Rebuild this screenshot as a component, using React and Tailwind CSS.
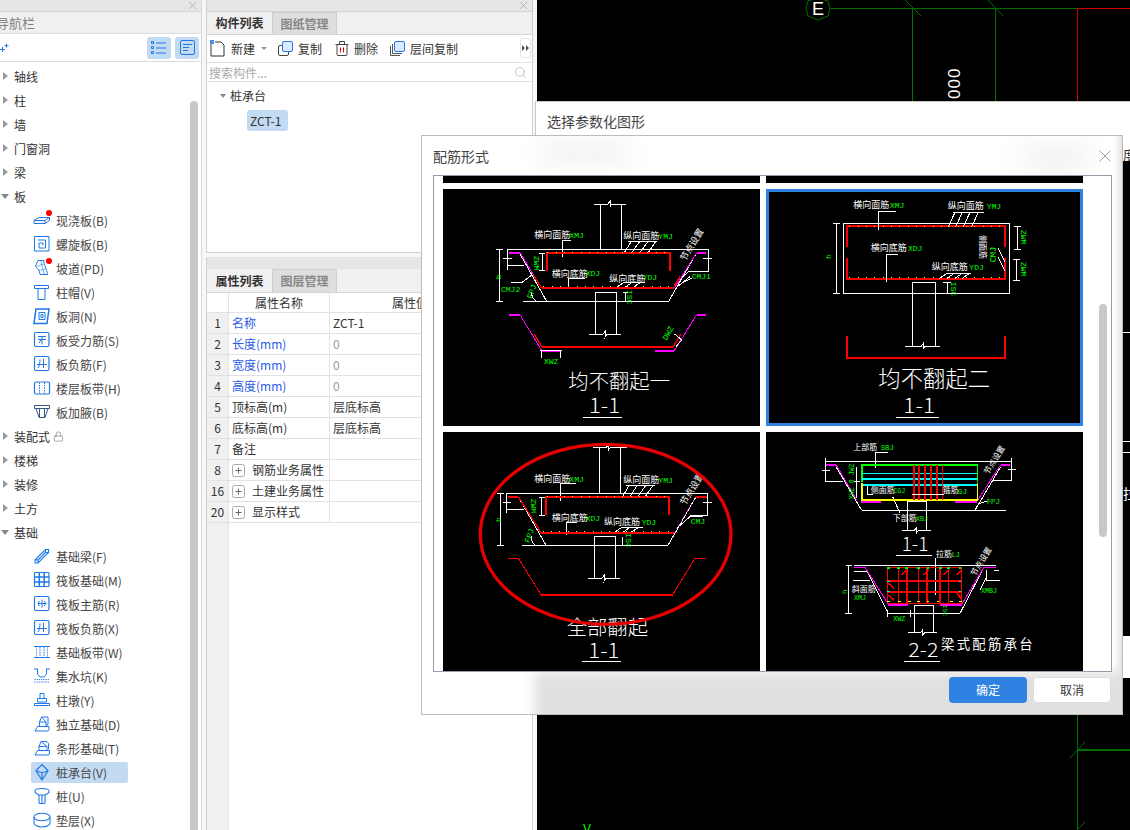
import React from "react";
import { X, Search, Lock } from "lucide-react";

const B = "#1f78e6";
const RED = "#ff0000", MAG = "#ff00ff", GRN = "#00ff00", YEL = "#ffff00", CYA = "#00ffff", W = "#ffffff";

const I = ({ children, dot, c = B }) => (
  <svg width="18" height="18" viewBox="0 0 18 18" fill="none" stroke={c} strokeWidth="1" className="shrink-0 overflow-visible">
    {children}
    {dot && <circle cx="16" cy="2" r="3" fill="#ff0000" stroke="none" />}
  </svg>
);

const icons = {
  slab: <path d="M1 9.5h11l4.5-3H6l-5 3v3h11l4.5-3v-3M12 9.5v3" />,
  spiral: <path d="M1.5 1.5h14.500v14.500H1.5zM5 5h7.500v8H6V8h4v2.500" />,
  ramp: <><path d="M5 1.500h6c-1 4 3 8 3.500 14H7c0-4-3-6-4.500-8.500z" /><path d="M8 2c0 4 2.500 8 3 13M10.500 5l-7 2.500M12.500 10l-7 1.500" strokeWidth=".6" /></>,
  cap: <path d="M1.5 2.500h14v3h-14zM3.500 5.500h10M5 5.500v11h7v-11" />,
  hole: <><path d="M3 2h13l-2 14.500H1z" strokeWidth="1.500" /><path d="M6 5.500h6v7H6z" /><path d="M8 7.500h2v3H8z" /></>,
  rebarA: <><rect x="1.500" y="1.500" width="14.500" height="14" rx="1.500" strokeWidth="1.200" /><path d="M5 8.500h8M5 5.500h8M9 5v8.500M6 12l2-3" /></>,
  rebarB: <><rect x="1.500" y="1.500" width="14.500" height="14" rx="1.500" strokeWidth="1.200" /><path d="M4 9.500h10M7 4.500c0 2-.5 7-2 8.500M10.500 4v9" /></>,
  strip: <><rect x="1.500" y="3" width="15" height="12" rx="1.500" strokeWidth="1.200" /><path d="M6.500 3.500v11M11.500 3.500v11" strokeDasharray="1.500 1" /></>,
  haunch: <path d="M1.500 2.500h15v3h-15zM3 5.500l3 9h6l3-9M6.500 5.500v9M11.500 5.500v9" stroke="#36577f" />,
  beam: <path d="M2 13L12.500 2.500h3v3L5 16H2zM2 13h3v3M12.500 2.500v3h3M5 13L12.500 5.500" strokeWidth="1.100" />,
  raft: <><rect x="1.500" y="1.500" width="14.500" height="14" rx="1" strokeWidth="1.200" /><path d="M1.500 6h14.500M1.500 11h14.500M6.300 1.500v14M11.200 1.500v14" strokeWidth="1.500" /></>,
  main: <><rect x="1.500" y="1.500" width="14.500" height="14" rx="1.500" strokeWidth="1.200" /><path d="M5 8.500h8M9 4.500v8M6.500 6l-1.500 2.500 1.500 2.500M11 6l2 2.500-2 2.500" /></>,
  band: <><path d="M1 3.500h16M1 14.500h16" strokeWidth="1.100" /><path d="M7 4v10M11 4v10" strokeDasharray="1.500 1" /><path d="M3.500 4v10M14.500 4v10" strokeWidth=".5" /></>,
  pit: <><path d="M1 2h4M13 2h4M4.500 2v5l2.500 3h4l2.500-3V2" /><path d="M1.500 12.500h15M1.500 15h15" strokeDasharray="1.200 1" /></>,
  pier: <path d="M7 2.500h4v5H7zM4.500 7.500h9v3.500h-9zM1.500 14.500h15M1.500 14.500v-2h15v2" />,
  pad: <path d="M6.500 7l2-5h6.500v7l-2 3M6.500 7h6.500v5M8.500 2l4.500 5M2 16l2.500-4.500h11.500v3L15 16zM6.500 7v4.500" />,
  stripF: <path d="M6 7.500l2-5h6l1.500 2v6M6 7.500h8v4M6 7.500v4M2 16l2.500-4.500h12V14l-1 2zM8 2.500l6 5" />,
  cap2: <path d="M9 1.500l6 6-2 3.500-4 6-4-6-2-3.500zM3 7.500c2 1.500 4 2 6 2s4-.5 6-2M9 9.500v7.500" strokeWidth="1.200" />,
  pile: <path d="M2 4c0-1.500 3-2.500 7-2.500S16 2.500 16 4v1.500L12 8v7.500a1 1 0 01-1 1H7a1 1 0 01-1-1V8L2 5.500zM6 8h6M9 8v8" strokeWidth="1.100" />,
  pad2: <><ellipse cx="9" cy="6" rx="8" ry="3.800" strokeWidth="1.100" /><path d="M1 6v6c0 2.200 3.600 4 8 4s8-1.800 8-4V6" strokeWidth="1.100" /></>,
};

const tree = [
  ["p", "轴线"], ["p", "柱"], ["p", "墙"], ["p", "门窗洞"], ["p", "梁"], ["o", "板"],
  ["c", "现浇板(B)", "slab", 1], ["c", "螺旋板(B)", "spiral"], ["c", "坡道(PD)", "ramp", 1], ["c", "柱帽(V)", "cap"],
  ["c", "板洞(N)", "hole"], ["c", "板受力筋(S)", "rebarA"], ["c", "板负筋(F)", "rebarB"], ["c", "楼层板带(H)", "strip"], ["c", "板加腋(B)", "haunch"],
  ["p", "装配式", null, 0, 1], ["p", "楼梯"], ["p", "装修"], ["p", "土方"], ["o", "基础"],
  ["c", "基础梁(F)", "beam"], ["c", "筏板基础(M)", "raft"], ["c", "筏板主筋(R)", "main"], ["c", "筏板负筋(X)", "rebarB"],
  ["c", "基础板带(W)", "band"], ["c", "集水坑(K)", "pit"], ["c", "柱墩(Y)", "pier"], ["c", "独立基础(D)", "pad"], ["c", "条形基础(T)", "stripF"],
  ["s", "桩承台(V)", "cap2"], ["c", "桩(U)", "pile"], ["c", "垫层(X)", "pad2"],
];

const Strip = () => (
  <div className="h-[12px] shrink-0 bg-[#e6e6e6] border-b border-[#d4d4d4] flex items-center justify-end pr-[2px]">
    <X size={13} strokeWidth={1.1} className="text-[#999999]" />
  </div>
);

function Nav() {
  return (
    <div className="relative w-[202px] h-full shrink-0 bg-white border-r border-[#d8d8d8] overflow-hidden">
      <Strip />
      <div className="h-[22px] bg-[#f0f0f0] border-b border-[#dcdcdc] flex items-center -ml-[4px] text-[13px] text-[#808080]">导航栏</div>
      <div className="h-[28px] border-b border-[#dcdcdc] flex items-center justify-between pr-[2px]">
        <svg width="9" height="10" viewBox="0 0 9 10" fill="none" stroke={B} strokeWidth="1"><path d="M2.500 4v5M0 6.500h5M6.500 1v3.500M4.500 2.700h4" /></svg>
        <div className="flex gap-[4px]">
          <div className="w-[24px] h-[22px] rounded-[3px] bg-[#c3daf3] flex items-center justify-center">
            <svg width="16" height="14" viewBox="0 0 16 14" fill="none" stroke={B}><path d="M5 2h10M5 7h10M5 12h10" /><path d="M0.500 .500h2v2h-2zM.500 5.500h2v2h-2zM.500 10.500h2v2h-2z" /></svg>
          </div>
          <div className="w-[24px] h-[22px] rounded-[3px] bg-[#c3daf3] flex items-center justify-center">
            <svg width="15" height="15" viewBox="0 0 15 15" fill="none" stroke={B}><rect x=".5" y=".5" width="14" height="14" rx="1.500" /><path d="M3 4.500h9M3 7.500h6M3 10.500h5" /></svg>
          </div>
        </div>
      </div>
      <div className="pt-[2px]">
        {tree.map(([k, t, ic, dot, lock]) =>
          k === "p" || k === "o" ? (
            <div key={t} className="h-[24px] flex items-center pl-[3px] text-[#333333]">
              <div className="w-[5px] mr-[6px] flex items-center">
                {k === "p" ? (
                  <div className="border-y-[4px] border-y-transparent border-l-[5px] border-l-[#999999]" />
                ) : (
                  <div className="-ml-[2px] border-x-[4px] border-x-transparent border-t-[5px] border-t-[#888888]" />
                )}
              </div>
              <span className="pt-[2px]">{t}</span>
              {lock && <Lock size={11} strokeWidth={1.2} className="ml-[3px] text-[#666666]" />}
            </div>
          ) : (
            <div key={t} className="h-[24px] flex items-center text-[#444444]">
              <div className={`ml-[31px] w-[97px] h-[21px] pl-[2px] flex items-center gap-[5px] whitespace-nowrap rounded-[2px] ${k === "s" ? "bg-[#c3daf3]" : ""}`}>
                <I dot={dot}>{icons[ic]}</I>
                <span className="pt-[2px]">{t}</span>
              </div>
            </div>
          )
        )}
      </div>
      <div className="absolute left-[190px] top-[101px] w-[8px] h-[729px] rounded-t-[4px] bg-[#c8c8c8]" />
    </div>
  );
}

const Tabs = ({ a, b, h = "h-[23px]" }) => (
  <div className={`${h} shrink-0 flex bg-[#f0f0f0] border-b border-[#d4d4d4]`}>
    <div className="w-[65px] flex items-center justify-center font-bold text-[#333333]">{a}</div>
    <div className="w-[65px] flex items-center justify-center font-bold text-[#888888] bg-[#dedede] border-x border-t border-[#cfcfcf]">{b}</div>
  </div>
);

const Tool = ({ icon, label, w }) => (
  <div className={`flex items-center gap-[5px] ${w}`}>
    {icon}
    <span className="whitespace-nowrap">{label}</span>
  </div>
);

const props = [
  ["1", "名称", "ZCT-1", 1], ["2", "长度(mm)", "0", 1, 1], ["3", "宽度(mm)", "0", 1, 1], ["4", "高度(mm)", "0", 1, 1],
  ["5", "顶标高(m)", "层底标高"], ["6", "底标高(m)", "层底标高"], ["7", "备注", ""],
  ["8", "钢筋业务属性", "", 0, 0, 1], ["16", "土建业务属性", "", 0, 0, 1], ["20", "显示样式", "", 0, 0, 1],
];

function Middle() {
  return (
    <div className="w-[327px] h-full shrink-0 ml-[4px] flex flex-col gap-[4px] text-[#333333]">
      <div className="h-[253px] shrink-0 flex flex-col bg-white border-x border-b border-[#d0d0d0]">
        <Strip />
        <Tabs a="构件列表" b="图纸管理" />
        <div className="h-[28px] shrink-0 border-b border-[#e2e2e2] flex items-center pl-[3px] relative">
          <Tool w="w-[52px]" label="新建" icon={
            <svg width="16" height="17" viewBox="0 0 16 17" fill="none" stroke="#333333"><path d="M1 3v13h13V5l-3-3H5" /><path d="M0 0h4v4H0z" fill="#4a90e2" stroke="none" /></svg>
          } />
          <div className="ml-[-1px] mr-[11px] border-x-[3px] border-x-transparent border-t-[3px] border-t-[#999999]" />
          <Tool w="w-[57px]" label="复制" icon={
            <svg width="15" height="15" viewBox="0 0 15 15" fill="none"><rect x=".5" y="4.500" width="10" height="10" rx="1.500" stroke="#444444" /><rect x="4.500" y=".5" width="10" height="10" rx="1.500" fill="#dbeafe" stroke={B} /></svg>
          } />
          <Tool w="w-[55px]" label="删除" icon={
            <svg width="14" height="15" viewBox="0 0 14 15" fill="none" stroke="#444444"><path d="M.5 3.500h13M4.500 3.500V.5h5v3M2 3.500v10a1 1 0 001 1h8a1 1 0 001-1v-10" /><path d="M5.500 6.500v5M8.500 6.500v5" stroke="#e00000" /></svg>
          } />
          <Tool label="层间复制" icon={
            <svg width="15" height="15" viewBox="0 0 15 15" fill="none"><path d="M.5 5v9.500H10M2.500 3v9.500H12" stroke="#555555" /><rect x="4.500" y=".5" width="10" height="10" rx="1.500" fill="#dbeafe" stroke={B} /></svg>
          } />
          <div className="absolute left-[313px] top-[3px] w-[11px] h-[20px] border border-[#e4e4e4] rounded-[3px] flex items-center justify-center">
            <svg width="7" height="6" viewBox="0 0 7 6" fill="#555555"><path d="M0 0l3 3-3 3zM4 0l3 3-3 3z" /></svg>
          </div>
        </div>
        <div className="h-[19px] shrink-0 border-b border-[#e2e2e2] flex items-center justify-between pl-[2px] pr-[5px] text-[#aaaaaa]">
          <span className="pt-[1px]">搜索构件...</span>
          <Search size={13} strokeWidth={1.3} className="text-[#aaaaaa]" />
        </div>
        <div className="pt-[4px]">
          <div className="h-[20px] flex items-center pl-[13px]">
            <div className="mr-[4px] border-x-[3px] border-x-transparent border-t-[4px] border-t-[#888888]" />
            桩承台
          </div>
          <div className="mt-[4px] ml-[40px] w-[41px] h-[21px] rounded-[3px] bg-[#c3daf3] flex items-center pl-[3px]">ZCT-1</div>
        </div>
      </div>
      <div className="flex-1 flex flex-col bg-white border-x border-[#d0d0d0] min-h-0">
        <div className="h-[12px] shrink-0 bg-[#e6e6e6]" />
        <Tabs a="属性列表" b="图层管理" h="h-[24px]" />
        <div className="h-[20px] shrink-0 flex border-b border-[#e2e2e2]">
          <div className="w-[22px] border-r border-[#e2e2e2]" />
          <div className="w-[101px] border-r border-[#e2e2e2] flex items-center justify-center">属性名称</div>
          <div className="pl-[62px] flex items-center whitespace-nowrap">属性值</div>
        </div>
        {props.map(([n, name, val, blue, gray, plus]) => (
          <div key={n} className="h-[21px] shrink-0 flex border-b border-[#e2e2e2]">
            <div className="w-[22px] bg-[#f0f0f0] border-r border-[#e2e2e2] flex items-center justify-center">{n}</div>
            <div className={`w-[101px] pl-[3px] border-r border-[#e2e2e2] flex items-center gap-[7px] ${blue ? "text-[#2b5ce6]" : ""}`}>
              {plus && (
                <svg width="13" height="13" viewBox="0 0 13 13" fill="none" stroke="#666666"><rect x=".5" y=".5" width="12" height="12" rx="2" stroke="#aaaaaa" /><path d="M3.500 6.500h6M6.500 3.500v6" /></svg>
              )}
              {name}
            </div>
            <div className={`pl-[3px] flex items-center ${gray ? "text-[#999999]" : ""}`}>{val}</div>
          </div>
        ))}
        <div className="flex-1 w-[22px] bg-[#f0f0f0] border-r border-[#e2e2e2]" />
      </div>
    </div>
  );
}

const P = ({ d, c = W, w = 3, dash }) => <path d={d} fill="none" stroke={c} strokeWidth={w} strokeDasharray={dash} shapeRendering="crispEdges" />;
const T = ({ x, y, s = 27, c = W, r, children }) => (
  <text x={x} y={y} fontSize={s} fill={c} transform={r ? `rotate(${r} ${x} ${y})` : undefined}>{children}</text>
);
const G = ({ x, y, s = 24, r, children }) => (
  <text x={x} y={y} fontSize={s} fill={GRN} transform={r ? `rotate(${r} ${x} ${y})` : undefined} className="[font-family:'Liberation_Mono',monospace]">{children}</text>
);
const Big = ({ x, y, s = 60, len, children }) => (
  <text x={x} y={y} fontSize={s} fill={W} textLength={len} lengthAdjust="spacingAndGlyphs" className="font-light">{children}</text>
);
const Brk = ({ x, y, l, r }) => <P d={`M${l} ${y}H${x - 6}l6 -8v16l6 -8H${r}`} />;

const Cad = ({ box, children }) => (
  <svg viewBox={box} className="block w-full h-full bg-black">{children}</svg>
);

const Cell1 = () => (
  <Cad box="9 27 951 711">
    <Brk x={510} y={72} l={463} r={557} />
    <P d="M481 72V208M544 72V208M203 208H805M250 364H686M238 218L320 364M686 364L770 218" />
    <P d="M178 209V365M168 209H190M168 365H190M203 208V270M203 257H252M190 235H215M805 208V275M755 275H805M790 235H815" />
    <P d="M367 232V182H392M565 183H650M575 183L550 222M600 183L572 222M625 183L597 222M648 183L622 222" />
    <P d="M385 328V295H435M530 322L550 308H615M555 322L575 308M580 322L600 308M212 308H245L275 285" />
    <P d="M306 219V272M298 219H315M298 272H315M555 338V365M548 338H565" />
    <P d="M290 364A30 30 0 0 1 275 335M720 300L745 275H800M715 318L750 290M725 310L755 295" />
    <P d="M466 338V463M530 338V463M466 338H530" />
    <Brk x={495} y={463} l={447} r={543} />
    <P c={MAG} w={5} d="M207 218H240M305 325H362M798 218H770M703 325H645" />
    <P c={MAG} d="M240 218L305 325M770 218L703 325" />
    <P c={RED} w={6} d="M322 272V218H690V272M305 324H703" />
    <P c={RED} w={4} d="M280 285L305 325M703 318L720 290" />
    <P c={YEL} w={3} dash="3 22" d="M322 216H690M310 320H703" />
    <P c={MAG} w={5} d="M207 404H240M305 512H362M798 404H770M703 512H645" />
    <P c={MAG} d="M240 404L305 512M770 404L703 512" />
    <P c={RED} w={6} d="M305 500H700" />
    <P c={RED} w={4} d="M283 463L305 500M700 500L722 463" />
    <P d="M305 512V535M362 512V535M300 512H365M704 462L725 480L708 500" />
    <T x={283} y={175}>横向面筋</T><G x={388} y={175}>XMJ</G>
    <T x={550} y={177}>纵向面筋</T><G x={655} y={177}>YMJ</G>
    <T x={335} y={291}>横向底筋</T><G x={437} y={288}>XDJ</G>
    <T x={508} y={305}>纵向底筋</T><G x={608} y={299}>YDJ</G>
    <G x={183} y={335}>CMJ2</G><G x={755} y={298}>CMJ1</G>
    <G x={183} y={298} r={-90}>b</G><G x={283} y={228} r={90}>ZWM</G>
    <G x={275} y={358} r={-70}>FPJ</G><G x={560} y={330} r={90}>ISC</G>
    <G x={312} y={552}>XWZ</G><G x={680} y={482} r={-60}>DWZ</G>
    <T x={735} y={245} r={-58}>节点设置</T>
    <Big x={385} y={628} s={61}>均不翻起一</Big>
    <Big x={447} y={699} s={64} len={93}>1-1</Big>
    <P d="M430 712H546" />
  </Cad>
);

const Cell2 = () => (
  <Cad box="27 36 933 693">
    <P d="M250 130H748V340H250ZM229 130V340M218 130H240M218 340H240M762 140H782M772 140V207M762 207H782M758 237H780M768 237V302M758 302H780" />
    <P c={RED} w={6} d="M260 200V138H735V200M260 235V298H735V235M260 468V533H735V468" />
    <P c={YEL} w={3} dash="3 22" d="M268 140H730M268 292H730" />
    <P d="M355 150V95H408M580 97H672M585 97L565 140M607 97L587 140M630 97L610 140M655 97L635 140" />
    <P d="M378 305V224H415M560 280H632M538 296L560 280M560 296L582 280M584 296L606 280M606 296L628 280" />
    <P d="M715 205L735 245M715 232L735 272M457 308V498M527 308V498M457 308H527M550 308H572M563 308V340" />
    <Brk x={490} y={498} l={436} r={540} />
    <T x={280} y={84}>横向面筋</T><G x={390} y={84}>XMJ</G>
    <T x={563} y={86}>纵向面筋</T><G x={680} y={86}>YMJ</G>
    <T x={332} y={213}>横向底筋</T><G x={444} y={212}>XDJ</G>
    <T x={515} y={270}>纵向底筋</T><G x={628} y={269}>YDJ</G>
    <T x={660} y={165} s={24} r={90}>侧面筋</T>
    <G x={707} y={247} s={26} r={-90}>CMJ</G>
    <G x={212} y={237} r={-90}>h</G>
    <G x={782} y={150} r={90}>ZWM</G><G x={782} y={246} r={90}>ZWM</G>
    <G x={574} y={305} r={90}>ISC</G>
    <Big x={355} y={620} s={67}>均不翻起二</Big>
    <Big x={430} y={699} s={64} len={95}>1-1</Big>
    <P d="M408 712H537" />
  </Cad>
);

const Cell3 = () => (
  <Cad box="9 6 951 717">
    <Brk x={505} y={52} l={460} r={560} />
    <P d="M479 52V190M541 52V190M200 190H803M245 346H684M235 200L318 346M684 346L768 200" />
    <P d="M180 190V347M170 190H192M170 347H192M200 190V250M200 238H252M190 217H212M803 190V255M750 255H803M790 217H815" />
    <P d="M304 203V255M296 203H315M296 255H315M361 212V160H408M558 165H645M568 165L545 205M592 165L567 205M618 165L590 205M640 165L612 205" />
    <P d="M379 315V278H412M525 306L545 292H610M550 306L570 292M575 306L595 292M285 346A30 30 0 0 1 275 318M710 295L752 258H790" />
    <P d="M463 320V445M527 320V445M463 320H527M548 320V346" />
    <Brk x={492} y={445} l={445} r={540} />
    <P c={RED} w={6} d="M318 254V200H688V254M302 308H703" />
    <P c={RED} w={5} d="M205 200H235M768 200H800" />
    <P c={RED} w={4} d="M235 200L303 308" />
    <P c={MAG} d="M703 308L768 200" w={2} dash="6 6" />
    <P c={YEL} w={3} dash="3 22" d="M322 198H685M308 303H700" />
    <P c={RED} w={5} d="M203 385H235M303 494H698M765 385H797" />
    <P c={RED} d="M235 385L303 494M698 494L765 385" />
    <T x={283} y={157}>横向面筋</T><G x={388} y={157}>XMJ</G>
    <T x={550} y={160}>纵向面筋</T><G x={655} y={158}>YMJ</G>
    <T x={335} y={273}>横向底筋</T><G x={437} y={272}>XDJ</G>
    <T x={492} y={285}>纵向底筋</T><G x={605} y={285}>YDJ</G>
    <G x={752} y={282}>CMJ</G><G x={184} y={276} r={-90}>h</G>
    <G x={272} y={206} r={90}>ZWM</G><G x={268} y={340} r={-70}>FPJ</G><G x={558} y={310} r={90}>ISC</G>
    <T x={735} y={228} r={-58}>节点设置</T>
    <Big x={380} y={616} s={61}>全部翻起</Big>
    <Big x={445} y={684} s={64} len={93}>1-1</Big>
    <P d="M427 693H543" />
    <ellipse cx="497" cy="313" rx="376" ry="270" fill="none" stroke="#e60000" strokeWidth="10" />
  </Cad>
);

const Cell4 = () => (
  <Cad box="18 6 951 717">
    <P d="M197 95H755M197 85V155M197 155H250M755 85V150M700 150H755M187 120H210M745 117H768M228 110L305 241M645 241L722 110M305 241H738M290 110V205M283 155H300" />
    <P d="M347 115V68H385M322 168V192H340M398 200L420 250M645 241A35 35 0 0 1 680 215" />
    <P c={MAG} w={5} d="M197 104H228M303 215H362M750 104H722M650 215H585" />
    <P c={MAG} d="M228 104L290 210M722 104L650 215" />
    <P c={GRN} w={5} d="M305 155V104H652V155" />
    <P c={CYA} w={5} d="M305 130H652M305 147H652M305 165H652" />
    <P c={YEL} w={5} d="M305 160V210H652V160" />
    <P c={RED} w={5} d="M462 105V210M477 105V210M495 105V210M512 105V210M530 105V210M547 105V210" />
    <P d="M455 192H552M442 213V300M500 213V300M442 213H500" />
    <Brk x={470} y={300} l={425} r={512} />
    <T x={280} y={60} s={24}>上部筋</T><G x={362} y={60} s={22}>SBJ</G>
    <T x={332} y={188} s={24}>侧面筋</T><G x={400} y={188} s={20}>CGJ</G>
    <T x={548} y={190} s={24}>箍筋</T><G x={594} y={192} s={22}>GJ</G>
    <T x={398} y={272} s={24}>下部筋</T><G x={468} y={272} s={20}>XBJ</G>
    <G x={680} y={222} s={22}>FPJ</G><G x={283} y={208} s={20} r={-90}>XWZ 8 JWZ</G>
    <T x={685} y={135} s={24} r={-58}>节点设置</T>
    <Big x={425} y={362} s={58} len={80}>1-1</Big>
    <P d="M408 376H515" />
    <P d="M282 407H707M258 407H275M265 407V550M255 550H275M282 425H325M702 421H718M280 450H330M680 420V450H720M525 385V495M315 412L385 550M385 550H600L672 412M382 540V560M450 540V560M382 550H450M660 480L680 440" />
    <P c={RED} w={5} d="M382 412H604V520H382ZM382 452H604M382 485H604M415 412V520M440 412V520M475 412V520M500 412V520M540 412V520M565 412V520" />
    <P c={RED} w={5} d="M425 435L440 420M490 435L505 420M550 435L565 420M590 435L604 420M385 460L402 475M385 495L402 510M590 490L604 505" />
    <P c={MAG} w={5} d="M282 412H315M385 524H445M707 412H672M605 524H540" />
    <P c={MAG} d="M315 412L385 523M672 412L605 523" />
    <P c={YEL} w={4} d="M382 515H390M415 515H423M445 515H453M472 515H480M500 515H508M530 515H538M570 515H578M597 515H605" />
    <P c={GRN} w={4} d="M382 414H390M412 414H420M436 414H444M472 414H480M500 414H508M538 414H546M562 414H570M596 414H604" />
    <P c={CYA} w={4} d="M382 454H390M382 485H390M596 454H604M596 485H604" />
    <P d="M462 525V608M520 525V608M462 525H520" />
    <Brk x={488} y={608} l={445} r={530} />
    <T x={528} y={380} s={24}>拉筋</T><G x={575} y={380} s={20}>LJ</G>
    <T x={275} y={487} s={24}>斜面筋</T><G x={282} y={510} s={20}>XMJ</G>
    <G x={663} y={490} s={20}>XMBJ</G><G x={400} y={572} s={20}>XWZ</G>
    <G x={262} y={492} s={22} r={-90}>h</G><G x={548} y={525} s={18} r={90}>ISC</G>
    <T x={645} y={440} s={24} r={-58}>节点设置</T>
    <Big x={445} y={681} s={58} len={90}>2-2</Big>
    <P d="M432 694H540" />
    <text x={543} y={656} fontSize={40} fill={W} letterSpacing={7}>梁式配筋承台</text>
  </Cad>
);

function Dialog() {
  return (
    <div className="absolute left-[421px] top-[135px] w-[702px] h-[580px] bg-white border border-[#bcbcbc] flex flex-col overflow-hidden">
      <div className="absolute left-[120px] top-[6px] w-[85px] h-[22px] bg-[#f0f0f0] blur-md" />
      <div className="absolute left-[600px] top-[10px] w-[65px] h-[24px] bg-[#f0f0f0] blur-md" />
      <div className="absolute right-0 top-0 w-[8px] h-full bg-linear-to-r from-white to-[#e4e4e4]" />
      <div className="absolute left-[113px] right-0 top-[536px] bottom-0 bg-[#e0e0e0] blur-[6px] -mr-[10px] -mb-[10px]" />
      <div className="relative h-[39px] shrink-0 flex items-center justify-between pl-[11px] pr-[7px]">
        <span className="text-[14px] text-[#444444]">配筋形式</span>
        <X size={20} strokeWidth={0.9} className="text-[#777777]" />
      </div>
      <div className="relative ml-[11px] w-[679px] h-[497px] shrink-0 bg-white border border-[#9a9aaa] overflow-hidden">
        <div className="grid grid-cols-[317px_317px] grid-rows-[7px_237px_239px] gap-[6px] pl-[9px]">
          <div className="bg-black" />
          <div className="bg-black" />
          <Cell1 />
          <div className="border-[3px] border-[#2f82e0] bg-black"><Cell2 /></div>
          <Cell3 />
          <Cell4 />
        </div>
        <div className="absolute left-[665px] top-[128px] w-[8px] h-[233px] rounded-[4px] bg-[#c8c8c8]" />
      </div>
      <div className="relative flex justify-end gap-[6px] pt-[5px] pr-[11px]">
        <div className="w-[78px] h-[26px] rounded-[4px] bg-[#2f82e2] text-white flex items-center justify-center">确定</div>
        <div className="w-[78px] h-[26px] rounded-[4px] bg-white border border-[#dddddd] text-[#333333] flex items-center justify-center">取消</div>
      </div>
    </div>
  );
}

function BackDialog() {
  return (
    <div className="absolute left-[535px] top-[101px] w-[595px] h-[577px] bg-white border-l border-t border-[#c8c8c8]">
      <div className="pl-[11px] pt-[12px] text-[14px] text-[#444444]">选择参数化图形</div>
      <div className="absolute left-[587px] top-[46px] w-[8px] text-[13px] text-[#333333] overflow-hidden whitespace-nowrap">度</div>
      <div className="absolute left-[587px] top-[59px] w-[8px] h-[475px] bg-black overflow-hidden">
        <div className="absolute left-0 right-0 top-[171px] h-px bg-white" />
        <div className="absolute left-0 right-0 top-[280px] h-px bg-white" />
        <div className="absolute left-0 right-0 top-[291px] h-px bg-white" />
        <div className="absolute left-0 top-[325px] text-[14px] text-white whitespace-nowrap">拉</div>
      </div>
    </div>
  );
}

function Canvas() {
  return (
    <div className="ml-[4px] flex-1 h-full bg-black">
      <svg viewBox="537 0 593 830" className="block w-full h-full">
        <g fill="none" stroke="#006f00">
          <path d="M806 8l2-7 10-3 10 3 2 7-2 8-10 4-10-4z" />
          <path d="M830 8.500H1077M912.500 8V101M995.500 8V101M905 0L921 16M988 0L1003 16M1077.500 715V830M1070 758L1085 742" />
          <path d="M1078 750H1130" strokeWidth="2" />
          <path d="M1077 830L1085 822" />
        </g>
        <path d="M1077 8.500H1130M1077.500 8V101" fill="none" stroke="#d00000" />
        <text x="812" y="15" fontSize="18" fill="#ffffff" className="[font-family:'Liberation_Sans',sans-serif]">E</text>
        <text x="960" y="99" fontSize="17" fill="#ffffff" letterSpacing="1" transform="rotate(-90 960 99)" className="[font-family:'Liberation_Sans',sans-serif]">000</text>
        <text x="583" y="833" fontSize="12" fill="#00ff00" className="[font-family:'Liberation_Sans',sans-serif]">V</text>
      </svg>
    </div>
  );
}

export default function App() {
  return (
    <div className="relative w-[1130px] h-[830px] overflow-hidden flex bg-[#f7f7f7] text-[12px] leading-none [font-family:'Noto_Sans_CJK_SC','Noto_Sans',sans-serif]">
      <Nav />
      <Middle />
      <Canvas />
      <BackDialog />
      <Dialog />
    </div>
  );
}
